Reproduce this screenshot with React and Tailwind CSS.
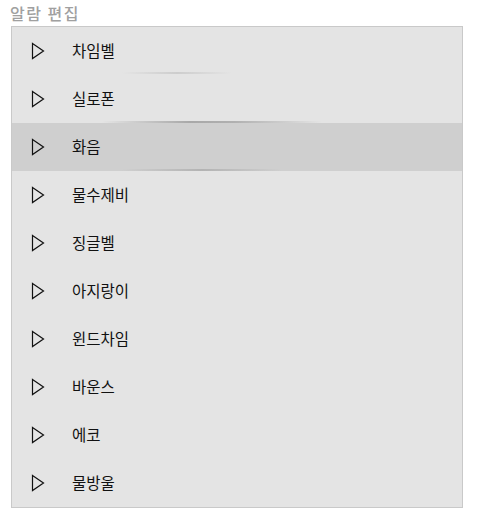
import { useState } from "react";

const sounds = [
  "차임벨",
  "실로폰",
  "화음",
  "물수제비",
  "징글벨",
  "아지랑이",
  "윈드차임",
  "바운스",
  "에코",
  "물방울",
];

const PlayIcon = () => (
  <svg width="14" height="18" viewBox="0 0 14 18" className="shrink-0">
    <path d="M1.5 1.5 L12.5 9 L1.5 16.5 Z" fill="none" stroke="#111" strokeWidth="1.2" strokeLinejoin="miter" />
  </svg>
);

const App = () => {
  const [selected, setSelected] = useState(2);

  return (
    <div className="w-[480px] h-[525px] bg-white pt-[3px] font-['Noto_Sans_CJK_KR','Noto_Sans',sans-serif]">
      <div className="pl-[10px] text-[16px] leading-[21px] font-medium text-[#a0a0a0] tracking-[1.5px]">
        알람 편집
      </div>
      <div className="ml-[11px] mt-[2px] w-[452px] border border-[#c9c9c9] bg-[#e4e4e4]">
        {sounds.map((name, i) => (
          <div
            key={name}
            onClick={() => setSelected(i)}
            className={`relative flex items-center h-[48px] cursor-pointer ${
              selected === i ? "bg-[#cfcfcf]" : "bg-[#e4e4e4]"
            }`}
          >
            <div className="w-[60px] pl-[19px] flex items-center">
              <PlayIcon />
            </div>
            <span className="text-[15.5px] text-[#111] leading-none pb-[1px]">{name}</span>
            {/* 희미한 그림자 선 */}
            {i === 0 && (
              <div className="absolute left-[110px] bottom-[1px] w-[110px] h-[2px] bg-[linear-gradient(to_right,transparent,#cdcdcd,transparent)]" />
            )}
            {i === 1 && (
              <div className="absolute left-[90px] bottom-0 w-[220px] h-[2px] bg-[linear-gradient(to_right,transparent,#a8a8a8_40%,#b0b0b0_60%,transparent)]" />
            )}
            {i === 2 && (
              <div className="absolute left-[110px] bottom-0 w-[160px] h-[2px] bg-[linear-gradient(to_right,transparent,#b3b3b3,transparent)]" />
            )}
          </div>
        ))}
      </div>
    </div>
  );
};

export default App;
